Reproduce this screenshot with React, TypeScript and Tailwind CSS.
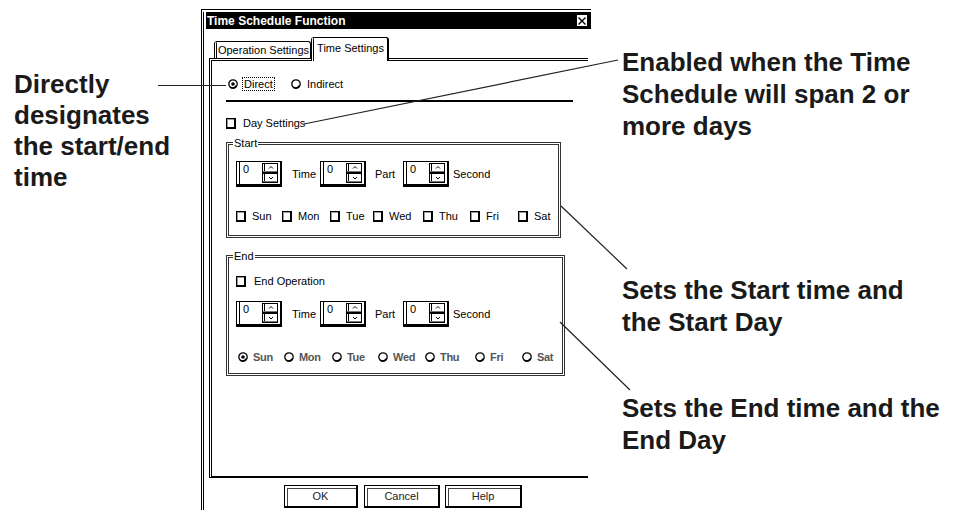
import React from "react";

const sunToSat = ["Sun", "Mon", "Tue", "Wed", "Thu", "Fri", "Sat"];
// widths of the day slots, measured off the dialog
const startSlots = ["w-[46px]", "w-[48px]", "w-[43px]", "w-[50px]", "w-[47px]", "w-[48px]", "w-[40px]"];
const endSlots = ["w-[46px]", "w-[48px]", "w-[46px]", "w-[47px]", "w-[50px]", "w-[47px]", "w-[40px]"];

function Check() {
  return (
    <span className="inline-block w-[10px] h-[11px] shrink-0 border border-black border-b-2 border-r-2 shadow-[inset_1px_1px_0_#999]" />
  );
}

function Radio({ on }: { on?: boolean }) {
  return (
    <svg width="10" height="10" viewBox="0 0 10 10" className="shrink-0">
      <circle cx="5" cy="5" r="4.2" fill="white" stroke="black" strokeWidth="1.3" />
      <path d="M2.2 8.2 A4.2 4.2 0 0 0 8.6 6.4" fill="none" stroke="black" strokeWidth="1.6" />
      {on && <circle cx="5" cy="5" r="1.8" fill="black" />}
    </svg>
  );
}

function Spin() {
  return (
    <div className="w-[46px] h-[26px] shrink-0 flex justify-between border border-black border-b-[3px] border-r-2 shadow-[inset_2px_0_0_#fff,inset_3px_0_0_#000] pl-[6px] pr-[1px] pt-[1px]">
      <span className="text-[11px] leading-[12px]">0</span>
      <svg width="17" height="20" viewBox="0 0 17 20">
        <rect x="0.5" y="0.5" width="15" height="9" fill="white" stroke="black" />
        <rect x="0.5" y="10.5" width="15" height="9" fill="white" stroke="black" />
        <line x1="2.5" y1="1" x2="2.5" y2="9" stroke="black" />
        <line x1="2.5" y1="11" x2="2.5" y2="19" stroke="black" />
        <line x1="1" y1="8.5" x2="15" y2="8.5" stroke="#777" />
        <line x1="1" y1="18.5" x2="15" y2="18.5" stroke="#777" />
        <path d="M7 5.5 L9 3.5 L11 5.5" fill="none" stroke="black" />
        <path d="M7 14 L9 16 L11 14" fill="none" stroke="black" />
      </svg>
    </div>
  );
}

function SpinRow() {
  return (
    <div className="flex items-center pl-[7px] h-[26px]">
      <Spin />
      <span className="ml-[10px] w-[28px]">Time</span>
      <Spin />
      <span className="ml-[9px] w-[28px]">Part</span>
      <Spin />
      <span className="ml-[4px]">Second</span>
    </div>
  );
}

function Button({ label, w }: { label: string; w: string }) {
  return (
    <div
      className={`${w} h-[23px] flex items-center justify-center border border-black border-b-2 border-r-2 shadow-[inset_2px_2px_0_#fff,inset_3px_3px_0_#444] text-[11px] text-[#222]`}
    >
      {label}
    </div>
  );
}

export default function App() {
  return (
    <div className="relative w-[960px] h-[510px] overflow-hidden bg-white flex font-['Liberation_Sans',Arial,sans-serif] text-[#1a1a1a]">
      {/* left note */}
      <div className="w-[201px] shrink-0 pl-[14px] pt-[69px] text-[26px] leading-[31px] font-bold">
        Directly
        <br />
        designates
        <br />
        the start/end
        <br />
        time
      </div>

      {/* dialog */}
      <div className="w-[390px] h-[530px] mt-[9px] shrink-0 border-l border-t border-black pl-px pt-[2px] text-[11px] leading-[14px] text-black">
        <div className="h-full border-l border-black pl-[2px]">
          <div className="h-[17px] bg-black flex items-center justify-between pl-[1px] pr-[3px]">
            <span className="text-white text-[12px] font-bold leading-none">Time Schedule Function</span>
            <div className="w-[13px] h-[13px] bg-white border border-black border-l-2 flex items-center justify-center">
              <svg width="8" height="8" viewBox="0 0 8 8">
                <path d="M0.5 0.5 L7.5 7.5 M7.5 0.5 L0.5 7.5" stroke="black" strokeWidth="1.4" />
              </svg>
            </div>
          </div>

          <div className="ml-[3px] mt-[8px] w-[379px]">
            {/* tabs */}
            <div className="flex items-end h-[21px] pl-[5px]">
              <div className="w-[97px] h-[17px] border-t border-r border-l-[3px] border-double border-black rounded-t-[3px] flex items-center justify-center">
                Operation Settings
              </div>
              <div className="relative z-10 w-[78px] h-[24px] -mb-[3px] bg-white border-t border-r-2 border-l-[3px] border-double border-black rounded-t-[3px] flex items-start justify-center pt-[3px]">
                Time Settings
              </div>
            </div>

            {/* panel */}
            <div className="h-[420px] border-l-[3px] border-t-[3px] border-b-2 border-double border-black pl-[14px] pt-[16px]">
              <div className="flex items-center h-[14px] pl-[2px]">
                <div className="w-[63px] flex items-center">
                  <Radio on />
                  <span className="ml-[4px] px-[1px] border border-dotted border-black leading-[12px]">Direct</span>
                </div>
                <Radio />
                <span className="ml-[6px]">Indirect</span>
              </div>

              <div className="mt-[9px] h-[2px] w-[347px] bg-black" />

              <div className="mt-[14px] flex items-center h-[14px]">
                <Check />
                <span className="ml-[7px]">Day Settings</span>
              </div>

              <fieldset className="mt-[7px] w-[335px] h-[101px] border-[3px] border-double border-[#333]">
                <legend className="ml-[4px] px-[1px] leading-[12px]">Start</legend>
                <div className="mt-[12px]">
                  <SpinRow />
                </div>
                <div className="mt-[22px] flex items-center h-[14px] pl-[7px]">
                  {sunToSat.map((d, i) => (
                    <div key={d} className={`${startSlots[i]} flex items-center shrink-0`}>
                      <Check />
                      <span className="ml-[6px]">{d}</span>
                    </div>
                  ))}
                </div>
              </fieldset>

              <fieldset className="mt-[12px] w-[335px] h-[126px] border-[3px] border-double border-[#333]">
                <legend className="ml-[4px] px-[1px] leading-[12px]">End</legend>
                <div className="mt-[12px] flex items-center h-[14px] pl-[7px]">
                  <Check />
                  <span className="ml-[8px]">End Operation</span>
                </div>
                <div className="mt-[13px]">
                  <SpinRow />
                </div>
                <div className="mt-[23px] flex items-center h-[14px] pl-[9px]">
                  {sunToSat.map((d, i) => (
                    <div key={d} className={`${endSlots[i]} flex items-center shrink-0`}>
                      <Radio on={i === 0} />
                      <span className="ml-[5px] font-bold text-[#555] tracking-[-0.3px]">{d}</span>
                    </div>
                  ))}
                </div>
              </fieldset>
            </div>

            <div className="mt-[7px] flex pl-[75px]">
              <Button label="OK" w="w-[74px]" />
              <div className="ml-[6px]">
                <Button label="Cancel" w="w-[76px]" />
              </div>
              <div className="ml-[5px]">
                <Button label="Help" w="w-[77px]" />
              </div>
            </div>
          </div>
        </div>
      </div>

      {/* right notes */}
      <div className="flex-1 pl-[31px] pt-[46px] flex flex-col text-[26px] leading-[32px] font-bold">
        <div>
          Enabled when the Time
          <br />
          Schedule will span 2 or
          <br />
          more days
        </div>
        <div className="mt-[132px]">
          Sets the Start time and
          <br />
          the Start Day
        </div>
        <div className="mt-[54px]">
          Sets the End time and the
          <br />
          End Day
        </div>
      </div>

      {/* leader lines */}
      <svg className="absolute inset-0 pointer-events-none" width="960" height="510" viewBox="0 0 960 510">
        <g stroke="#222" strokeWidth="1.2" fill="none">
          <line x1="158" y1="85.5" x2="226" y2="85.5" />
          <line x1="618" y1="60" x2="304" y2="124" />
          <line x1="561" y1="206" x2="627" y2="269" />
          <line x1="560" y1="322" x2="630" y2="390" />
        </g>
      </svg>
    </div>
  );
}
